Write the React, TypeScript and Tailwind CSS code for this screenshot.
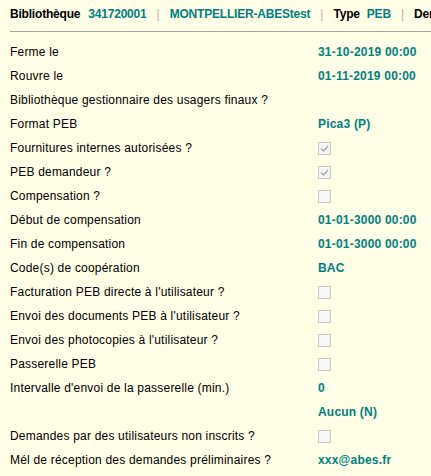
import React from "react";

type Row = { label: string; value?: string; check?: boolean };

const rows: Row[] = [
  { label: "Ferme le", value: "31-10-2019 00:00" },
  { label: "Rouvre le", value: "01-11-2019 00:00" },
  { label: "Bibliothèque gestionnaire des usagers finaux ?" },
  { label: "Format PEB", value: "Pica3 (P)" },
  { label: "Fournitures internes autorisées ?", check: true },
  { label: "PEB demandeur ?", check: true },
  { label: "Compensation ?", check: false },
  { label: "Début de compensation", value: "01-01-3000 00:00" },
  { label: "Fin de compensation", value: "01-01-3000 00:00" },
  { label: "Code(s) de coopération", value: "BAC" },
  { label: "Facturation PEB directe à l'utilisateur ?", check: false },
  { label: "Envoi des documents PEB à l'utilisateur ?", check: false },
  { label: "Envoi des photocopies à l'utilisateur ?", check: false },
  { label: "Passerelle PEB", check: false },
  { label: "Intervalle d'envoi de la passerelle (min.)", value: "0" },
  { label: "", value: "Aucun (N)" },
  { label: "Demandes par des utilisateurs non inscrits ?", check: false },
  { label: "Mél de réception des demandes préliminaires ?", value: "xxx@abes.fr" },
];

function Box({ checked }: { checked: boolean }) {
  return (
    <div className="w-[13px] h-[13px] border border-[#c8c8c8] bg-[#f7f7f2] flex items-center justify-center">
      {checked && (
        <svg width="11" height="11" viewBox="0 0 11 11">
          <path d="M2 5.5 L4.5 8 L9 3" fill="none" stroke="#a8a8a8" strokeWidth="1.3" />
        </svg>
      )}
    </div>
  );
}

function Sep() {
  return <span className="mx-[10px] text-[#c4a9a9] font-normal tracking-normal">|</span>;
}

export default function App() {
  return (
    <div
      className="w-[431px] h-[476px] bg-[#fffee6] overflow-hidden text-[12px] text-black"
      style={{ fontFamily: '"Liberation Sans", Arial, sans-serif' }}
    >
      <div className="ml-[10px] h-[32px] border-b border-[#a6a69e] pt-[6px] leading-[16px] whitespace-nowrap overflow-hidden font-bold flex tracking-[-0.2px]">
        <span>Bibliothèque</span>
        <span className="ml-[8px] text-[#008080]">341720001</span>
        <Sep />
        <span className="text-[#008080]">MONTPELLIER-ABEStest</span>
        <Sep />
        <span>Type</span>
        <span className="ml-[7px] text-[#008080]">PEB</span>
        <Sep />
        <span>Demandeur</span>
      </div>
      <div className="pt-[8px] pl-[10px] tracking-[0.2px]">
        {rows.map((r, i) => (
          <div key={i} className="flex h-[24px] items-center leading-[24px]">
            <div className="w-[308px] whitespace-nowrap">{r.label}</div>
            <div className="font-bold text-[#008080] whitespace-nowrap">
              {r.check !== undefined ? <Box checked={r.check} /> : r.value}
            </div>
          </div>
        ))}
      </div>
    </div>
  );
}
